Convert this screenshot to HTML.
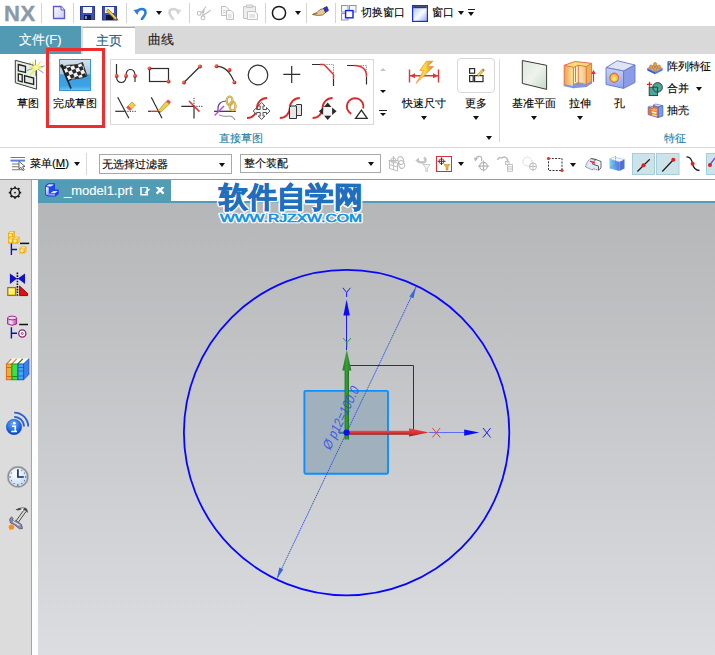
<!DOCTYPE html>
<html><head><meta charset="utf-8">
<style>
*{margin:0;padding:0;box-sizing:border-box}
html,body{width:715px;height:655px;overflow:hidden;background:#fff;font-family:"Liberation Sans",sans-serif;position:relative}
.a{position:absolute}
.t{position:absolute;font-size:12px;line-height:12px;color:#000;white-space:nowrap;-webkit-text-stroke:0.12px currentColor}
.sep{position:absolute;width:1px;background:#d4d4d4}
.dd{position:absolute;width:0;height:0;border-left:3.5px solid transparent;border-right:3.5px solid transparent;border-top:4px solid #111}
</style></head><body>

<!-- title bar -->
<div class="a" style="left:0;top:0;width:715px;height:26px;background:#fff"></div>
<div class="a" style="left:4px;top:0px;font-size:22px;line-height:27px;font-weight:bold;color:#8a9aa8;letter-spacing:0.5px;-webkit-text-stroke:0.4px #8a9aa8">NX</div>
<div class="sep" style="left:41px;top:3px;height:20px"></div>
<svg class="a" style="left:52px;top:5px" width="14" height="15" viewBox="0 0 14 15">
 <defs><linearGradient id="gdoc" x1="0" y1="0" x2="1" y2="1"><stop offset="0" stop-color="#fff"/><stop offset="1" stop-color="#c8c8f0"/></linearGradient></defs>
 <path d="M1.5 1.5 H9 L12.5 5 V13.5 H1.5 Z" fill="url(#gdoc)" stroke="#5b5bd0" stroke-width="1.3"/>
 <path d="M9 1.5 V5 H12.5" fill="#eef" stroke="#5b5bd0" stroke-width="1"/>
</svg>
<div class="sep" style="left:73px;top:3px;height:20px"></div>
<svg class="a" style="left:80px;top:6px" width="15" height="14" viewBox="0 0 15 14">
 <rect x="0.5" y="0.5" width="14" height="13.5" fill="#4050b0" stroke="#283890"/>
 <rect x="3" y="1" width="9" height="6" fill="#f4f6ff"/>
 <rect x="4" y="9" width="7" height="5" fill="#101830"/>
 <rect x="5" y="10" width="2" height="3" fill="#6a8af0"/>
</svg>
<svg class="a" style="left:102px;top:6px" width="17" height="15" viewBox="0 0 17 15">
 <rect x="0.5" y="0.5" width="14" height="13.5" fill="#4050b0" stroke="#283890"/>
 <rect x="3" y="1" width="9" height="6" fill="#f4f6ff"/>
 <rect x="4" y="9" width="7" height="5" fill="#101830"/>
 <path d="M6 3 L15 12 L13.5 14 L4.5 5 Z" fill="#f0d040" stroke="#806010" stroke-width="0.7"/>
 <path d="M15 12 L16.5 14.5 L13.5 14 Z" fill="#e02020"/>
</svg>
<div class="sep" style="left:126px;top:3px;height:20px"></div>
<svg class="a" style="left:133px;top:6px" width="14" height="14" viewBox="0 0 14 14">
 <path d="M4 6 C6 2,12 2,12.5 6 C13 9,10 11,9 13" fill="none" stroke="#2a7de0" stroke-width="2.6" stroke-linecap="round"/>
 <path d="M0.5 4 L6 3 L4.5 9 Z" fill="#2a7de0"/>
</svg>
<div class="dd" style="left:156px;top:11px"></div>
<svg class="a" style="left:168px;top:6px" width="14" height="14" viewBox="0 0 14 14">
 <path d="M10 6 C8 2,2 2,1.5 6 C1 9,4 11,5 13" fill="none" stroke="#d4d4d4" stroke-width="2.6" stroke-linecap="round"/>
 <path d="M13.5 4 L8 3 L9.5 9 Z" fill="#d4d4d4"/>
</svg>
<div class="sep" style="left:189px;top:3px;height:20px"></div>
<svg class="a" style="left:196px;top:5px" width="16" height="16" viewBox="196 5 16 16">
 <g fill="none" stroke="#c0c0c0" stroke-width="1.1">
  <circle cx="199.2" cy="13.4" r="1.9"/><circle cx="203" cy="17.8" r="1.9"/>
  <path d="M201 13 L206 6.5 M202.2 16 L210.6 10.3 M201 13 Q203 12 204.5 11 M202.5 15.8 L204.3 8.8"/>
 </g>
</svg>
<svg class="a" style="left:220px;top:5px" width="16" height="16" viewBox="220 5 16 16">
 <g fill="#f8f8f8" stroke="#c0c0c0" stroke-width="1">
  <path d="M221.5 6.5 H226 L228.5 9 V15.5 H221.5 Z"/>
  <path d="M226.5 10.5 H231 L233.5 13 V19.5 H226.5 Z"/>
 </g>
 <path d="M223 10.5 H225.5 M223 12.5 H225.5 M228 15 H231.5 M228 17 H231.5" stroke="#c8c8c8" stroke-width="0.9"/>
</svg>
<svg class="a" style="left:242px;top:4px" width="17" height="17" viewBox="242 4 17 17">
 <path d="M243.5 6.5 H255.5 V18.5 H243.5 Z" fill="#eeeeee" stroke="#c4c4c4"/>
 <path d="M246.5 5 H252.5 V7.5 H246.5 Z" fill="#e4e4e4" stroke="#c4c4c4" stroke-width="0.9"/>
 <path d="M247.5 11.5 H255 L257.5 14 V19.5 H247.5 Z" fill="#fafafa" stroke="#c4c4c4"/>
 <path d="M249.5 15 H255 M249.5 17 H255" stroke="#c8c8c8" stroke-width="0.9"/>
</svg>
<div class="sep" style="left:265px;top:3px;height:20px"></div>
<svg class="a" style="left:271px;top:5px" width="16" height="16" viewBox="0 0 16 16">
 <circle cx="8" cy="8" r="6.6" fill="none" stroke="#1a1a1a" stroke-width="1.5"/>
</svg>
<div class="dd" style="left:295px;top:11px"></div>
<div class="sep" style="left:306px;top:3px;height:20px"></div>
<svg class="a" style="left:311px;top:5px" width="18" height="15" viewBox="311 5 18 15">
 <path d="M312.5 14.5 L317 12.5 L320 9.5 L324 8.5 L326 12 L322.5 15 L317.5 15.5 Z" fill="#e8c890" stroke="#7a5a30" stroke-width="0.8"/>
 <path d="M312.5 14.5 L317.5 13.5" stroke="#7a5a30" stroke-width="0.7"/>
 <path d="M323.5 8 L327 6.5 L328.5 10.5 L325.5 12.5 Z" fill="#2a3ad0" stroke="#101880" stroke-width="0.6"/>
</svg>
<div class="sep" style="left:335px;top:3px;height:20px"></div>
<svg class="a" style="left:340px;top:4px" width="17" height="18" viewBox="340 4 17 18">
 <g fill="#f4f6fa" stroke="#8a96a8" stroke-width="1">
  <rect x="341.5" y="5.5" width="6.5" height="6.5"/><rect x="349.5" y="5.5" width="6.5" height="6.5"/><rect x="341.5" y="13.5" width="6.5" height="6.5"/>
 </g>
 <rect x="345.6" y="10.6" width="7.4" height="7.2" fill="#fff" stroke="#1020f0" stroke-width="1.4"/>
</svg>
<div class="t" style="left:361px;top:5px;font-size:11.2px;line-height:14px">切换窗口</div>
<svg class="a" style="left:411px;top:4px" width="17" height="18" viewBox="411 4 17 18">
 <defs><linearGradient id="gwin" x1="0" y1="0" x2="1" y2="1"><stop offset="0" stop-color="#a8c0ec"/><stop offset="0.55" stop-color="#f8faff"/><stop offset="1" stop-color="#8eaae6"/></linearGradient></defs>
 <rect x="412.6" y="5.6" width="14.8" height="15.8" fill="url(#gwin)" stroke="#1a2ae8" stroke-width="1.2"/>
 <rect x="413.2" y="6.2" width="13.6" height="2" fill="#283a68"/>
</svg>
<div class="t" style="left:432px;top:5px;font-size:11.2px;line-height:14px">窗口</div>
<div class="dd" style="left:458px;top:11px"></div>
<div class="a" style="left:468px;top:9px;width:7px;height:1.3px;background:#222"></div>
<div class="dd" style="left:468px;top:12px"></div>

<!-- tab row -->
<div class="a" style="left:0;top:26px;width:715px;height:28px;background:#d9d9d9"></div>
<div class="a" style="left:0;top:26px;width:81px;height:28px;background:#5299b3"></div>
<div class="a" style="left:82px;top:27px;width:53px;height:27px;background:#fff;border-top:1px solid #a8a8a8;border-left:1px solid #e0e0e0"></div>
<div class="t" style="left:19px;top:33px;font-size:13px;line-height:14px;color:#fff">文件(F)</div>
<div class="t" style="left:96px;top:34px;font-size:13px;line-height:14px;color:#166088">主页</div>
<div class="t" style="left:148px;top:33px;font-size:13px;line-height:14px;color:#222">曲线</div>

<!-- ribbon -->
<div class="a" style="left:0;top:54px;width:715px;height:93px;background:#fff"></div>

<!-- 草图 -->
<svg class="a" style="left:13px;top:57px" width="34" height="34" viewBox="13 57 34 34">
 <path d="M15.3 60.3 L36.6 66 L36.6 89.2 L15.3 82.8 Z" fill="#e8f0e8" stroke="#3a3a3a" stroke-width="1"/>
 <path d="M18.3 64.5 L25.5 66.3 L25.5 72.5 L18.3 70.8 Z" fill="#e2e8e2" stroke="#222" stroke-width="1.3"/>
 <path d="M18.3 73.8 L22.2 74.8 L22.2 81.8 L18.3 80.8 Z" fill="#eef2ee" stroke="#222" stroke-width="1.3"/>
 <path d="M24.6 75.6 L33.6 78 L33.6 84.5 L24.6 82.2 Z" fill="#e2e8e2" stroke="#222" stroke-width="1.3"/>
 <g stroke="#5a98c0" stroke-width="0.9"><path d="M35.6 67.5 L35.4 59.5 M35.6 67.5 L44.5 66 M35.6 67.5 L43.5 73 M35.6 67.5 L35.5 76 M35.6 67.5 L27 70.5 M35.6 67.5 L29.5 63"/></g>
 <path d="M35.8 67.5 L40.5 61.5 L37.6 66 L43 67.5 L37.8 68.8 L30 75 L35 68.7 L29 67.5 L34.5 66.3 L32.5 62 Z" fill="#f4f060" stroke="#f0e840" stroke-width="0.8"/>
 <circle cx="36" cy="67.5" r="2.6" fill="#f8f4a0"/>
</svg>
<div class="t" style="left:17px;top:97px;font-size:11.3px">草图</div>

<!-- 完成草图 -->
<svg class="a" style="left:59px;top:59px" width="32" height="32" viewBox="0 0 32 32">
 <defs>
  <linearGradient id="gfin" x1="0" y1="0" x2="0" y2="1">
   <stop offset="0" stop-color="#d6e2ec"/><stop offset="0.45" stop-color="#a9c7df"/><stop offset="0.5" stop-color="#3d9ee0"/><stop offset="0.85" stop-color="#3aa3e6"/><stop offset="1" stop-color="#6ec6f2"/>
  </linearGradient>
  <pattern id="chk" width="7.6" height="7.6" patternUnits="userSpaceOnUse" patternTransform="rotate(-22)">
   <rect width="7.6" height="7.6" fill="#f2f2f2"/><rect width="3.8" height="3.8" fill="#2a2a2a"/><rect x="3.8" y="3.8" width="3.8" height="3.8" fill="#2a2a2a"/>
  </pattern>
 </defs>
 <rect x="0.5" y="0.5" width="31" height="31" fill="url(#gfin)" stroke="#3a95d0"/>
 <path d="M3.5 8 Q9 5.5,14 6 Q19 6,23.5 3.5 L28 17 Q23 19.5,18 19.5 Q13 19.5,9 22 Z" fill="url(#chk)" stroke="#2a2a2a" stroke-width="0.9"/>
 <path d="M2.8 7.5 L12 29.5" stroke="#1a1a1a" stroke-width="1.7"/>
 <circle cx="2.8" cy="7" r="1.7" fill="#1a1a1a"/>
</svg>
<div class="t" style="left:53px;top:97px;font-size:11.3px">完成草图</div>
<div class="a" style="left:46px;top:48px;width:59px;height:80px;border:3px solid #ee2d2d"></div>

<!-- gallery -->
<div class="a" style="left:110px;top:59px;width:264px;height:66px;border:1px solid #d9d9d9"></div>
<svg class="a" style="left:110px;top:59px" width="264" height="66" viewBox="110 59 264 66">
 <g fill="none" stroke="#2e2e2e" stroke-width="1.2">
  <path d="M116.5 64 V76 Q116.5 82.5 121.3 82.5 Q126 82.5 126 76 Q126 69.5 130.5 69.5 Q135 69.5 135 76 V82"/>
  <rect x="149.5" y="68.5" width="19" height="13"/>
  <path d="M184 82.5 L200 66.5"/>
  <path d="M216.5 66.3 Q228 66 234.4 82.4"/>
  <circle cx="258" cy="75" r="9.8"/>
  <path d="M283.3 74.4 H300.3 M291.7 66 V83"/>
  <path d="M312 64.5 H320 M333.5 78.5 V86"/>
  <path d="M347 65.5 H354 M366.5 76.5 V84.5"/>
 </g>
 <g fill="none" stroke="#e03030" stroke-width="1.5">
  <path d="M320 64.5 H324 L333.5 74.5 V78.5"/>
  <path d="M354 65.5 Q366.5 65.5 366.5 76.5"/>
 </g>
 <g fill="none" stroke="#888" stroke-width="1" stroke-dasharray="1.2 1.2">
  <path d="M324 64.5 H333.5 V74.5"/>
  <path d="M358 65.5 H366.5 V72"/>
 </g>
 <defs><radialGradient id="gdot" cx="0.35" cy="0.35" r="0.7"><stop offset="0" stop-color="#ff8070"/><stop offset="0.6" stop-color="#e03828"/><stop offset="1" stop-color="#a01810"/></radialGradient></defs><g fill="url(#gdot)">
  <circle cx="116.6" cy="76" r="1.95"/><circle cx="126" cy="76" r="1.95"/><circle cx="135" cy="76" r="1.95"/>
  <circle cx="149.5" cy="68.4" r="1.95"/><circle cx="168.5" cy="81.5" r="1.95"/>
  <circle cx="184" cy="82.5" r="1.95"/><circle cx="200" cy="66.5" r="1.95"/>
  <circle cx="216.5" cy="66.3" r="1.95"/><circle cx="229.5" cy="70" r="1.95"/><circle cx="234.4" cy="82.4" r="1.95"/>
 </g>
 <!-- row 2 -->
 <g fill="none" stroke="#2e2e2e" stroke-width="1.2">
  <path d="M117.7 97.3 L128.9 118.3"/>
  <path d="M115.3 111.3 H124.7"/>
  <path d="M151.3 97.3 L162 118.3"/>
  <path d="M148 111.3 H151.3"/>
  <path d="M181.3 106.3 H194 V118.6"/>
  <path d="M214 111.3 H235.8"/>
 </g>
 <g fill="none" stroke="#333" stroke-width="1" stroke-dasharray="1.2 1.2">
  <path d="M125 111.3 H136"/>
  <path d="M194 106.3 H203 M194 106.3 V97"/>
 </g>
 <path d="M151.3 111.3 H158.5" stroke="#e03030" stroke-width="1.4"/>
 <path d="M189 101 L199.5 111.6" stroke="#e03030" stroke-width="1.5"/>
 <path d="M126.5 107.5 L132 102 L135.5 105 L130 110.5 Z" fill="#f0d040" stroke="#a08020" stroke-width="0.6"/>
 <path d="M126.5 107.5 L128.3 105.7 L131.8 109 L130 110.5 Z" fill="#e85050"/>
 <path d="M158 111 L166 101.5 L169.5 104 L161 112 Z" fill="#f0d040" stroke="#a08020" stroke-width="0.6"/>
 <path d="M166 101.5 L168 99.5 L171 102 L169.5 104 Z" fill="#e85050"/>
 <path d="M158 111 L158.5 113 L161 112 Z" fill="#333"/>
 <path d="M218 111 Q217 101 227 101" fill="none" stroke="#5040b0" stroke-width="1.2"/>
 <path d="M214.6 115.5 L224 106" stroke="#d040e0" stroke-width="1.4"/>
 <path d="M219 115 Q224 117 229 116 Q233 116 235 120" fill="none" stroke="#999" stroke-width="1.2"/>
 <ellipse cx="229.6" cy="100.8" rx="2.9" ry="4.3" fill="none" stroke="#c09020" stroke-width="2.2"/>
 <ellipse cx="229.6" cy="100.8" rx="2.9" ry="4.3" fill="none" stroke="#f8e8a0" stroke-width="0.8"/>
 <ellipse cx="232.6" cy="106.2" rx="2.9" ry="4.3" fill="none" stroke="#c09020" stroke-width="2.2"/>
 <ellipse cx="232.6" cy="106.2" rx="2.9" ry="4.3" fill="none" stroke="#f8e8a0" stroke-width="0.8"/>
 
 <g fill="none" stroke="#d82a2a" stroke-width="1.9">
  <path d="M247 118 A10 10 0 0 0 257 108 A10 10 0 0 1 267 98"/>
  <path d="M279.8 118 A10 10 0 0 0 289.8 108 A10 10 0 0 1 299.8 98"/>
  <path d="M312.6 118 A10 10 0 0 0 322.6 108 A10 10 0 0 1 332.6 98"/>
  <path d="M351.2 113.8 A8.3 8.3 0 1 1 363.2 108.5"/>
 </g>
 <path d="M261.6 102.5 L265 106 H263 V109.5 H266.5 V107.5 L270 111 L266.5 114.5 V112.5 H263 V116 H265 L261.6 119.5 L258.2 116 H260.2 V112.5 H256.7 V114.5 L253.2 111 L256.7 107.5 V109.5 H260.2 V106 H258.2 Z" fill="#f4f4f4" stroke="#444" stroke-width="0.9"/>
 <path d="M295.5 105.5 L296.5 104.5 H301.5 V115.5 H295.5 Z" fill="#e4e4e4" stroke="#333" stroke-width="1"/>
 <path d="M289.5 107.5 L291 106 H296.5 V118.5 H289.5 Z" fill="#e8e8e8" stroke="#333" stroke-width="1"/>
 <path d="M327.7 102.5 L331.5 107 H323.9 Z M327.7 120 L331.5 115.5 H323.9 Z M318.8 111.3 L323.3 107.5 V115.1 Z M336.6 111.3 L332.1 107.5 V115.1 Z" fill="#2a2a2a"/>
 <rect x="323.5" y="107" width="8.4" height="8.4" fill="#f4f4f4"/>
 <path d="M355.6 118.4 H367.2 L361.4 110.2 Z" fill="none" stroke="#2a2a2a" stroke-width="1.3"/>
</svg>
<!-- scroll arrows -->
<div class="a" style="left:379.5px;top:68px;width:0;height:0;border-left:3.5px solid transparent;border-right:3.5px solid transparent;border-bottom:3.5px solid #c4c4c4"></div>
<div class="dd" style="left:379.5px;top:90px;border-top-width:3.5px"></div>
<div class="a" style="left:379px;top:110px;width:7.5px;height:1.2px;background:#222"></div>
<div class="dd" style="left:379.5px;top:112.5px;border-top-width:3.5px"></div>
<div class="t" style="left:219px;top:132px;font-size:11.3px;color:#2a7fa8">直接草图</div>

<!-- 快速尺寸 -->
<svg class="a" style="left:405px;top:58px" width="38" height="30" viewBox="405 58 38 30">
 <g stroke="#d83838" stroke-width="1.4" fill="#d83838">
  <path d="M409.5 69.5 V82.5 M438.5 69.5 V82.5 M410 75.7 H438"/>
  <path d="M410 75.7 L415 73.2 V78.2 Z M438 75.7 L433 73.2 V78.2 Z" stroke="none"/>
 </g>
 <defs><linearGradient id="gbolt" x1="0" y1="0" x2="1" y2="0"><stop offset="0" stop-color="#f8c030"/><stop offset="0.5" stop-color="#f4e040"/><stop offset="1" stop-color="#f07030"/></linearGradient></defs>
 <path d="M426.3 61.2 H432.9 L427.6 66.5 H433.5 L416.2 83.3 L423.5 70.4 H419.8 Z" fill="url(#gbolt)" stroke="#f08838" stroke-width="0.7"/>
</svg>
<div class="t" style="left:402px;top:97px;font-size:11.3px">快速尺寸</div>
<div class="dd" style="left:421px;top:116px"></div>
<!-- 更多 -->
<div class="a" style="left:457px;top:58px;width:38px;height:35px;border:1px solid #d8d8d8;border-radius:4px"></div>
<svg class="a" style="left:466px;top:66px" width="20" height="18" viewBox="466 66 20 18">
 <g fill="none" stroke="#2a2a2a" stroke-width="1.2">
  <rect x="469.6" y="68.6" width="5" height="4.6"/>
  <rect x="469.6" y="75.6" width="3.6" height="6"/>
  <rect x="474.6" y="75.6" width="8.4" height="6"/>
 </g>
 <path d="M477 75 L482 69.5 L483.8 71 L478.8 76.3 Z" fill="#f0d040" stroke="#8a6a20" stroke-width="0.5"/>
 <path d="M482 69.5 L483 68.5 L484.8 70 L483.8 71 Z" fill="#e05050"/>
</svg>
<div class="t" style="left:465px;top:97px;font-size:11.3px">更多</div>
<div class="dd" style="left:473px;top:116px"></div>
<div class="dd" style="left:486px;top:136px"></div>
<div class="sep" style="left:499px;top:59px;height:83px;background:#dadada"></div>

<!-- 基准平面 -->
<svg class="a" style="left:519px;top:57px" width="30" height="35" viewBox="519 57 30 35">
 <defs><linearGradient id="gpl" x1="0" y1="0" x2="1" y2="1"><stop offset="0" stop-color="#dce6dc"/><stop offset="0.5" stop-color="#eef3ee"/><stop offset="1" stop-color="#c4d8c4"/></linearGradient></defs>
 <path d="M522.3 60.5 L546.6 65.3 L546.6 89.4 L522.3 83.4 Z" fill="url(#gpl)" stroke="#3a3a3a" stroke-width="1"/>
</svg>
<div class="t" style="left:512px;top:97px;font-size:11.3px">基准平面</div>
<div class="dd" style="left:531px;top:116px"></div>
<!-- 拉伸 -->
<svg class="a" style="left:562px;top:59px" width="36" height="32" viewBox="562 59 36 32">
 <defs>
  <linearGradient id="gex1" x1="0" y1="0" x2="1" y2="0"><stop offset="0" stop-color="#f0a040"/><stop offset="1" stop-color="#fbe6b0"/></linearGradient>
  <linearGradient id="gex2" x1="0" y1="0" x2="1" y2="0"><stop offset="0" stop-color="#fbeec0"/><stop offset="1" stop-color="#efc070"/></linearGradient>
 </defs>
 <path d="M564.2 80 L573.4 82 L578.3 80 L591.6 79 V83.7 L586.3 87.1 L573.4 88.2 L564.2 86.3 Z" fill="#7a9ae4"/>
 <path d="M564.2 65.3 L573.4 67.3 V86 L564.2 84 Z" fill="url(#gex1)"/>
 <path d="M573.4 67.3 L578.3 65.3 V82 L573.4 84 Z" fill="#fdf2b8"/>
 <path d="M578.3 65.3 L586.3 66.5 V84 L578.3 82 Z" fill="url(#gex2)"/>
 <path d="M586.3 66.5 L591.6 63.3 V81 L586.3 84 Z" fill="#f0b050"/>
 <path d="M564.2 65.3 L575.1 61.5 L591.6 63.3 L586.3 66.5 L578.3 65.3 L573.4 67.3 Z" fill="#f6e070"/>
 <g fill="none" stroke="#e87050" stroke-width="1">
  <path d="M564.2 65.3 L575.1 61.5 L591.6 63.3 V83.7 M564.2 65.3 V86.3 M564.2 65.3 L573.4 67.3 L578.3 65.3 L586.3 66.5 L591.6 63.3"/>
  <path d="M573.4 67.3 V88.2 M578.3 65.3 V86 M586.3 66.5 V87.1 M575.5 67 V82" />
 </g>
 <path d="M593.5 81.8 V72.5" stroke="#e03040" stroke-width="1.2"/>
 <path d="M591.2 74 L593.5 69.8 L595.8 74 Z" fill="#e03040"/>
</svg>
<div class="t" style="left:569px;top:97px;font-size:11.3px">拉伸</div>
<div class="dd" style="left:577px;top:116px"></div>
<!-- 孔 -->
<svg class="a" style="left:604px;top:59px" width="33" height="32" viewBox="604 59 33 32">
 <defs>
  <linearGradient id="gh1" x1="0" y1="0" x2="0" y2="1"><stop offset="0" stop-color="#c8d4f4"/><stop offset="1" stop-color="#8ea4ec"/></linearGradient>
  <radialGradient id="gh2" cx="0.5" cy="0.6" r="0.6"><stop offset="0" stop-color="#fff080"/><stop offset="1" stop-color="#f0a020"/></radialGradient>
 </defs>
 <path d="M606 67.6 L617.3 60.7 L635 65 L623.6 71 Z" fill="#dde4f4" stroke="#6a78c8" stroke-width="0.9"/>
 <path d="M606 67.6 L623.6 71 V88.4 L606 84.5 Z" fill="url(#gh1)" stroke="#6a78c8" stroke-width="0.9"/>
 <path d="M623.6 71 L635 65 V82.5 L623.6 88.4 Z" fill="#8a9ce8" stroke="#6a78c8" stroke-width="0.9"/>
 <ellipse cx="614.2" cy="77.7" rx="4.3" ry="4.6" fill="url(#gh2)" stroke="#e05030" stroke-width="0.9"/>
</svg>
<div class="t" style="left:614px;top:97px;font-size:11.3px">孔</div>
<!-- small buttons -->
<svg class="a" style="left:645px;top:59px" width="20" height="62" viewBox="645 59 20 62">
 <path d="M647.3 68.5 L655 64.8 L662.6 68.5 L655 72.3 Z" fill="#a8c0f4" stroke="#5a7ad0" stroke-width="0.6"/>
 <path d="M647.3 68.5 L655 72.3 V74.3 L647.3 70.5 Z" fill="#3a5cc4"/>
 <path d="M655 72.3 L662.6 68.5 V70.5 L655 74.3 Z" fill="#5a7cd8"/>
 <g fill="#f0a038" stroke="#a86010" stroke-width="0.5">
  <rect x="649.6" y="65" width="3" height="4.2" rx="1.4"/><rect x="653.6" y="62.6" width="3" height="4.2" rx="1.4"/>
  <rect x="657.5" y="65" width="3" height="4.2" rx="1.4"/><rect x="653.6" y="67" width="3" height="4.2" rx="1.4"/>
 </g>
 <path d="M647 84.3 H652 M649.5 81.8 V86.8" stroke="#d82828" stroke-width="1.3"/>
 <rect x="649.2" y="87.2" width="8.4" height="8.4" fill="#4aa898" stroke="#333" stroke-width="0.9"/>
 <circle cx="657.6" cy="87.4" r="4.8" fill="#4aa898" stroke="#333" stroke-width="0.9"/>
 <path d="M652.8 87.2 H657.6 V92.2" fill="none" stroke="#333" stroke-width="0.9"/>
 <path d="M648.2 107 L650 106 L653.3 106.8 V105 L655.5 104 L662.8 105.6 L658.1 107 L653.3 106.5" fill="#d8e4f8" stroke="#5a78d0" stroke-width="0.7"/>
 <path d="M658.1 107 L662.8 105.6 V116 L658.1 117.6 Z" fill="#8098e8" stroke="#4060c8" stroke-width="0.8"/>
 <path d="M648.2 107 L653.3 108.2 V105.2 L658.1 107 V117.6 L648.2 114.6 Z" fill="#f07030" stroke="#4a68c8" stroke-width="0.8"/>
 <path d="M653.3 108.2 L657.2 109 V111.5 L650 110 Z" fill="#f8a860"/>
 <path d="M651.5 111.2 L656.5 112 V114 L652 113 Z" fill="#fff4d0"/>
 <path d="M652 114 L656.8 115 V116.5 L652.5 115.5 Z" fill="#f8e860"/>
</svg>
<div class="t" style="left:667px;top:60px;font-size:11.3px">阵列特征</div>
<div class="t" style="left:667px;top:82px;font-size:11.3px">合并</div>
<div class="dd" style="left:696px;top:87px"></div>
<div class="t" style="left:667px;top:104px;font-size:11.3px">抽壳</div>
<div class="t" style="left:664px;top:132px;font-size:11.3px;color:#2a7fa8">特征</div>
<div class="a" style="left:0;top:147px;width:715px;height:1px;background:#d8d8d8"></div>

<!-- toolbar row -->
<div class="a" style="left:0;top:148px;width:715px;height:31px;background:#fff"></div>
<div class="a" style="left:0;top:179px;width:715px;height:1px;background:#8f9ca6"></div>
<!-- toolbar content -->
<svg class="a" style="left:9px;top:155px" width="18" height="17" viewBox="9 155 18 17">
 <path d="M10.5 157.5 H25 M12 164 H22 M12 166.8 H20 M12 169.8 H24" stroke="#777" stroke-width="1.1"/>
 <path d="M10.5 160.6 H25" stroke="#5a80e0" stroke-width="2"/>
 <path d="M19 161.3 V169 L21 167.3 L23 170.5 L24.3 169.8 L22.5 166.7 L25 166.5 Z" fill="#fff" stroke="#444" stroke-width="0.8"/>
</svg>
<div class="t" style="left:30px;top:157px;font-size:11.3px">菜单(<u>M</u>)</div>
<div class="dd" style="left:74px;top:162px"></div>
<div class="sep" style="left:86px;top:153px;height:22px;background:#d8d8d8"></div>
<div class="a" style="left:99px;top:154px;width:133px;height:20px;border:1px solid #a8a8a8;background:#fff"></div>
<div class="t" style="left:102px;top:158px;font-size:11px">无选择过滤器</div>
<div class="dd" style="left:219px;top:163px"></div>
<div class="a" style="left:240px;top:154px;width:141px;height:19px;border:1px solid #a8a8a8;background:#fff"></div>
<div class="t" style="left:244px;top:157px;font-size:11px">整个装配</div>
<div class="dd" style="left:368px;top:162px"></div>
<svg class="a" style="left:386px;top:152px" width="329" height="26" viewBox="386 152 329 26">
 <g fill="none" stroke="#bdbdbd" stroke-width="1">
  <path d="M389.5 160.5 V168.5 L397.5 171 V163 Z M389.5 164.5 L397.5 167 M393.5 161.8 V170"/>
  <path d="M388.5 160.5 H398 M393.4 156 V162"/>
  <circle cx="393.4" cy="160.5" r="2.6"/>
  <ellipse cx="400.8" cy="160.5" rx="2.8" ry="4" transform="rotate(-20 400.8 160.5)"/>
  <ellipse cx="401.5" cy="164.5" rx="2.8" ry="4" transform="rotate(-20 401.5 164.5)"/>
 </g>
 <path d="M417.5 160.5 Q420 163.5 424.5 162 Q427 160 424 157.5" fill="none" stroke="#c4c4c4" stroke-width="2.4"/>
 <path d="M415.3 160.5 L419 157.5 V163.5 Z" fill="#c4c4c4"/>
 <path d="M423 164.5 H430.3 L427.5 168 V171.5 H425.8 V168 Z" fill="#f4f4f4" stroke="#c8c8c8" stroke-width="0.9"/>
 <g fill="none" stroke="#b4b4b4" stroke-width="1.2">
  <path d="M475.5 159.5 Q476.5 156 479.5 156.3 Q482.5 156.8 481.5 161"/>
  <circle cx="483.5" cy="166.2" r="3.8"/>
  <path d="M478 166.2 H489 M483.5 160.5 V171.5"/>
 </g>
 <path d="M474 157.5 L478 158.5 L475 161.5 Z" fill="#b4b4b4"/>
 <g fill="none" stroke="#c0c0c0" stroke-width="1">
  <path d="M497.5 160 Q499 156.5 502 158 Q504 156 506.5 158 Q508.5 160 507 162.5" stroke-width="1.6"/>
  <rect x="505.5" y="161.5" width="3.5" height="3"/>
  <path d="M507.5 164.5 V171.5 M507.5 164.5 H512.5 V171.3 H507.5 M507.5 166.8 H512.5 M507.5 169 H512.5"/>
 </g>
 <g fill="none" stroke="#bdbdbd" stroke-width="1">
  <circle cx="527.5" cy="161.5" r="4.5" stroke-dasharray="1 1"/>
  <circle cx="533" cy="166.5" r="3.5"/><path d="M529 166.5 H537 M533 162.5 V170.5"/>
 </g>
 <rect x="436.5" y="156.5" width="15" height="15" fill="none" stroke="#d03040" stroke-width="1"/>
 <circle cx="441.5" cy="161.3" r="2.5" fill="none" stroke="#d03030" stroke-width="1"/>
 <path d="M437.5 161.3 H445.5 M441.5 157.5 V165" stroke="#333" stroke-width="1"/>
 <path d="M444 164.5 H450 L448 167 V170 H446 V167 Z" fill="#f0b030" stroke="#c08020" stroke-width="0.5"/>
 <rect x="548.5" y="158.5" width="13.5" height="12" fill="none" stroke="#333" stroke-width="1" stroke-dasharray="2 1.3"/>
 <circle cx="548.5" cy="158.5" r="1.6" fill="#e03030"/><circle cx="562" cy="170.5" r="1.6" fill="#e03030"/>
 <path d="M585.5 167 Q587 160.5 591 158.5 L596 159.5 Q594 161 592.5 164 L598.5 166 V170.2 L593 168.8 L592.5 170 Z" fill="#e4e8f0" stroke="#5a6aa0" stroke-width="0.8" stroke-dasharray="1.6 0.6"/>
 <path d="M591 158.5 L596 159.5 L601 161.5 V168 L598.5 170.2 V166 L592.5 164 Q594 161 596 159.5" fill="#f4f4f4" stroke="#444" stroke-width="0.8"/>
 <path d="M590 161.2 L595 163.2" stroke="#e82828" stroke-width="1.3"/>
 <defs><linearGradient id="gcube" x1="0" y1="0" x2="1" y2="0"><stop offset="0" stop-color="#78d4f4"/><stop offset="1" stop-color="#4a78e0"/></linearGradient></defs>
 <path d="M609.5 159 L614 157 L624.5 159.5 L619.5 162 Z" fill="#f4f4fa" stroke="#8090e0" stroke-width="0.6" stroke-dasharray="1.2 0.6"/>
 <path d="M609.5 159 L619.5 162 V171 L609.5 168.5 Z" fill="url(#gcube)"/>
 <path d="M619.5 162 L624.5 159.5 V168.5 L619.5 171 Z" fill="#4a70e0"/>
 <path d="M615.5 156 V165 L624 167.5 M615.5 165 L610 168" stroke="#e05050" stroke-width="0.6" fill="none" stroke-dasharray="1.2 0.6"/>
 <rect x="632.5" y="153.5" width="22" height="21" fill="#cde3ea" stroke="#a6ced8"/>
 <rect x="656.5" y="153.5" width="22.5" height="21" fill="#cde3ea" stroke="#a6ced8"/>
 <rect x="706.5" y="153.5" width="22" height="21" fill="#cde3ea" stroke="#a6ced8"/>
 <path d="M637.4 171.5 L649.8 159.2 M662.3 171.5 L673.8 159.2" stroke="#222" stroke-width="1.3"/>
 <circle cx="643.5" cy="165.3" r="2" fill="#e02020"/>
 <circle cx="673.3" cy="159.8" r="2" fill="#e02020"/>
 <path d="M686.5 157 Q691 156.5 692.5 163.5 Q694 170.5 699.5 170.5" fill="none" stroke="#222" stroke-width="1.3"/>
 <circle cx="692.6" cy="163.8" r="2" fill="#e02020"/>
 <path d="M709 166 L715 158" stroke="#8040d0" stroke-width="1.3"/>
 <circle cx="710" cy="165" r="2" fill="#e02020"/>
</svg>
<div class="dd" style="left:458px;top:162px"></div>
<div class="dd" style="left:570px;top:163px"></div>


<!-- left bar -->
<div class="a" style="left:0;top:180px;width:31px;height:475px;background:#dcdcdc"></div>
<div class="a" style="left:31px;top:180px;width:1px;height:475px;background:#a5a5a5"></div>
<div class="a" style="left:32px;top:180px;width:6px;height:475px;background:#fdfdfd"></div>
<svg class="a" style="left:0;top:180px" width="31" height="360" viewBox="0 180 31 360">
 <defs>
  <radialGradient id="gcf" cx="0.4" cy="0.4" r="0.7"><stop offset="0" stop-color="#fffcc0"/><stop offset="0.6" stop-color="#f8e050"/><stop offset="1" stop-color="#f0a000"/></radialGradient>
  <g id="cube">
   <path d="M0 2 L2 0 H7 V5 L5 7 H0 Z" fill="#f4a810"/>
   <path d="M0.8 2.6 H4.6 V6.3 H0.8 Z" fill="url(#gcf)"/>
   <path d="M1 2 L2.5 0.8 H6.2 L4.8 2 Z" fill="#fff0a0"/>
   <path d="M5.2 2.4 L6.4 1.2 V4.8 L5.2 6 Z" fill="#f8d040"/>
  </g>
  <radialGradient id="ginfo" cx="0.45" cy="0.3" r="0.7"><stop offset="0" stop-color="#6ab0ff"/><stop offset="0.7" stop-color="#1a64e0"/><stop offset="1" stop-color="#0a40b0"/></radialGradient>
  <radialGradient id="gclk" cx="0.4" cy="0.35" r="0.7"><stop offset="0" stop-color="#ffffff"/><stop offset="1" stop-color="#b8d4f4"/></radialGradient>
  <linearGradient id="gyel" x1="0" y1="0" x2="1" y2="1"><stop offset="0" stop-color="#ffffd0"/><stop offset="1" stop-color="#f8f000"/></linearGradient>
  <linearGradient id="gcyl" x1="0" y1="0" x2="1" y2="0"><stop offset="0" stop-color="#d090c8"/><stop offset="0.35" stop-color="#f4e0f8"/><stop offset="1" stop-color="#b84aa0"/></linearGradient>
 </defs>
 <!-- gear -->
 <circle cx="15" cy="192.6" r="4.5" fill="none" stroke="#1a1a1a" stroke-width="1.4"/>
 <g stroke="#1a1a1a" stroke-width="1.8"><path d="M15 186.4 V188.4 M15 196.8 V198.8 M8.8 192.6 H10.8 M19.2 192.6 H21.2 M10.6 188.2 L12 189.6 M18 195.6 L19.4 197 M19.4 188.2 L18 189.6 M12 195.6 L10.6 197"/></g>
 <circle cx="15" cy="192.6" r="0.9" fill="#1a1a1a"/>
 <!-- assembly nav -->
 <use href="#cube" x="8" y="231"/>
 <use href="#cube" x="8" y="236.5"/>
 <use href="#cube" x="12.5" y="236.8"/>
 <use href="#cube" x="19.5" y="246.5"/>
 <path d="M11.4 243.5 V255 M11.4 249.5 H17" stroke="#1010b0" stroke-width="1.4"/>
 <path d="M20 243.4 H29.2" stroke="#111" stroke-width="1.5"/>
 <!-- constraint nav -->
 <path d="M9.9 273.4 L17 278.6 L9.9 283.9 Z M25 273.4 L17.8 278.6 L25 283.9 Z" fill="#1010d0"/>
 <path d="M17.4 272.6 V296" stroke="#111" stroke-width="1.6" stroke-dasharray="1.6 1.1"/>
 <rect x="7.8" y="287.6" width="7.8" height="7.8" fill="url(#gyel)" stroke="#b07000" stroke-width="1.3"/>
 <path d="M19.6 286 L27.6 293.6 V295.6 H19.6 Z" fill="#e01010" stroke="#800000" stroke-width="0.9"/>
 <!-- part nav -->
 <path d="M7.6 318 V324 Q12.1 326.6 16.6 324 V318" fill="url(#gcyl)" stroke="#a02888" stroke-width="1"/>
 <ellipse cx="12.1" cy="318" rx="4.5" ry="1.9" fill="#f0d0ec" stroke="#a02888" stroke-width="1"/>
 <path d="M19.2 324.5 H28" stroke="#111" stroke-width="1.5"/>
 <path d="M11.4 327.2 V338.6 M11.4 333.3 H17" stroke="#1010b0" stroke-width="1.4"/>
 <circle cx="22.3" cy="333.5" r="3.6" fill="#fff" stroke="#902070" stroke-width="1.3"/>
 <circle cx="22.3" cy="333.5" r="1" fill="none" stroke="#902070" stroke-width="0.9"/>
 <!-- books -->
 <path d="M6.2 363.8 L11.2 358.6 H28.9 L23.5 363.8 Z" fill="#fff"/>
 <path d="M6.6 363.8 L11.4 358.8 M11.8 363.8 L16.6 358.8 M17.9 363.8 L22.7 358.8" stroke="#e07020" stroke-width="1.1"/>
 <path d="M17.9 363.8 L22.7 358.8" stroke="#20a020" stroke-width="1.1"/>
 <rect x="6.4" y="364" width="5.4" height="15.7" fill="#e0b040" stroke="#e06a10" stroke-width="1"/>
 <path d="M6.6 367.5 H11.6 M6.6 376.5 H11.6" stroke="#f05a10" stroke-width="1"/>
 <rect x="11.9" y="364" width="5.8" height="15.7" fill="#40e040" stroke="#10a010" stroke-width="1"/>
 <path d="M12 376.5 H17.6" stroke="#109010" stroke-width="1"/>
 <rect x="18" y="364" width="5.6" height="15.7" fill="#40a8f0" stroke="#2050d0" stroke-width="1"/>
 <path d="M18.1 367.5 H23.5 M18.1 371 H23.5 M18.1 376 H23.5" stroke="#2060d0" stroke-width="0.9"/>
 <path d="M23.6 363.8 L28.9 358.8 V374.4 L23.6 379.7 Z" fill="#3a80e8" stroke="#2050c8" stroke-width="0.8"/>
 <!-- info -->
 <path d="M14.2 412.6 A14 14 0 0 1 28.2 426.6" fill="none" stroke="#2a5fd0" stroke-width="1.8"/>
 <path d="M14.2 416.8 A9.8 9.8 0 0 1 24 426.6" fill="none" stroke="#2a5fd0" stroke-width="1.8"/>
 <circle cx="14" cy="427" r="7.7" fill="url(#ginfo)" stroke="#0a48c0" stroke-width="0.5"/>
 <circle cx="14.3" cy="423.2" r="1.4" fill="#fff"/>
 <path d="M12 426.2 H15.3 V431.2 M11.2 431.5 H17" stroke="#fff" stroke-width="1.6" fill="none"/>
 <!-- clock -->
 <circle cx="17.9" cy="476.9" r="10" fill="url(#gclk)" stroke="#8a8a8a" stroke-width="1.6"/>
 <circle cx="17.9" cy="476.9" r="10.8" fill="none" stroke="#c8c8c8" stroke-width="0.6"/>
 <g fill="#333"><circle cx="17.9" cy="485" r="0.7"/><circle cx="10" cy="476.9" r="0.7"/><circle cx="25.8" cy="476.9" r="0.7"/><circle cx="14" cy="483.5" r="0.5"/><circle cx="21.8" cy="483.5" r="0.5"/><circle cx="11.4" cy="480.7" r="0.5"/><circle cx="24.4" cy="480.7" r="0.5"/><circle cx="11.4" cy="473" r="0.5"/><circle cx="24.4" cy="473" r="0.5"/><circle cx="21.8" cy="470.3" r="0.5"/></g>
 <path d="M17.9 469.3 V477 H23.8" stroke="#1a2a50" stroke-width="1.6" fill="none"/>
 <!-- tools -->
 <path d="M23.5 510.5 L16 521 M26 511.5 L18.5 522" stroke="#4a4a4a" stroke-width="1"/>
 <path d="M23.5 510.5 L16 521 M26 511.5 L18.5 522" stroke="#f0f0f0" stroke-width="0" />
 <path d="M15.5 509.8 Q20 506.5 25.5 507.8 Q28.5 509.5 27.5 513 L25.5 510.8 Q21.5 509 18 510.5 Z" fill="#4a4a4a"/>
 <path d="M20.5 508.5 L24 508.3 L22.5 511 Z" fill="#fff"/>
 <path d="M9.5 519.5 L11.5 516.8 L13 518.5 L12.5 520.2 L14.5 521.5 L15.8 520.5 L21.5 524.5 L22.5 528.5 L19.5 528.8 L14 524.5 L10.5 523 Z" fill="#8c8aae" stroke="#44445e" stroke-width="0.7"/>
 <path d="M13 521.5 L19.5 525.5" stroke="#e8e8f4" stroke-width="1.2"/>
 <path d="M8.5 527 Q9 524 12 524.5 Q15 525.5 14 528.5 Q12 530.5 9.5 529.5 Z" fill="#f89010"/>
</svg>


<!-- document tab -->
<div class="a" style="left:38px;top:180px;width:677px;height:23px;background:#fff"></div>
<div class="a" style="left:38px;top:180px;width:133px;height:21px;background:#529cb5"></div>
<div class="a" style="left:38px;top:201px;width:677px;height:2px;background:#529cb5"></div>
<svg class="a" style="left:44px;top:182px" width="16" height="16" viewBox="44 182 16 16">
 <defs><linearGradient id="gblk" x1="0" y1="0" x2="0" y2="1"><stop offset="0" stop-color="#f4f4ff"/><stop offset="1" stop-color="#9aa4ff"/></linearGradient></defs>
 <path d="M45 186 L48.2 183.3 H55 V189.4 H58.8 V194 L55.5 196.4 H48 L45 195 Z" fill="#1e3ee6"/>
 <path d="M45.9 187 L48.7 187.6 V195.6 L45.9 194.6 Z" fill="url(#gblk)"/>
 <path d="M48.7 193.4 L55 193.8 V195.8 L48.7 195.6 Z" fill="#8a9aff"/>
 <path d="M46.2 186.3 L49 184.2 L54 184.4 L51 186.6 Z" fill="#e4ecff"/>
 <path d="M49.5 187.5 L54.2 185.5 V191 L49.5 192.5 Z" fill="#1450d8"/>
 <path d="M50.5 193 L53.5 191 H58 L55 193.2 Z" fill="#dce6ff"/>
</svg>
<div class="t" style="left:64px;top:184px;font-size:13px;line-height:14px;color:#fff">_model1.prt</div>
<svg class="a" style="left:139px;top:187px" width="28" height="11" viewBox="139 187 28 11">
 <path d="M141 187 H147.2 V194.8 H141 Z" fill="none" stroke="#fff" stroke-width="1.5"/>
 <path d="M142.5 186 H145.8" stroke="#fff" stroke-width="1.2"/>
 <path d="M145 193 L149.6 189" stroke="#fff" stroke-width="1.6"/>
 <path d="M156.6 186.6 L163.6 193.6 M163.6 186.6 L156.6 193.6" stroke="#fff" stroke-width="2.3"/>
</svg>


<!-- viewport -->
<div class="a" style="left:38px;top:203px;width:677px;height:452px;background:linear-gradient(#b5b6b8,#dcdde0)"></div>
<!-- watermark -->
<svg class="a" style="left:210px;top:176px" width="160" height="52" viewBox="210 176 160 52">
 <text x="219" y="207" font-family="Liberation Sans, sans-serif" font-size="29" font-weight="900" textLength="144" lengthAdjust="spacingAndGlyphs" fill="#1f6fbf" stroke="#fff" stroke-width="4" stroke-linejoin="round" paint-order="stroke">软件自学网</text>
 <text x="219" y="207" font-family="Liberation Sans, sans-serif" font-size="29" font-weight="900" textLength="144" lengthAdjust="spacingAndGlyphs" fill="#1f6fbf" stroke="#1f6fbf" stroke-width="0.9">软件自学网</text>
 <text x="220" y="221.6" font-family="Liberation Sans, sans-serif" font-size="10.8" font-weight="normal" textLength="142" lengthAdjust="spacingAndGlyphs" fill="#1a94e4" stroke="#fff" stroke-width="2.6" stroke-linejoin="round" paint-order="stroke">WWW.RJZXW.COM</text>
 <text x="220" y="221.6" font-family="Liberation Sans, sans-serif" font-size="10.8" font-weight="normal" textLength="142" lengthAdjust="spacingAndGlyphs" fill="#1a94e4" stroke="#1a94e4" stroke-width="0.5">WWW.RJZXW.COM</text>
</svg>
<!-- sketch -->
<svg class="a" style="left:38px;top:203px" width="677" height="452" viewBox="38 203 677 452">
 <defs>
  <linearGradient id="gred" x1="0" y1="0" x2="0" y2="1"><stop offset="0" stop-color="#f04848"/><stop offset="0.6" stop-color="#d83030"/><stop offset="1" stop-color="#901818"/></linearGradient>
  <linearGradient id="ggrn" x1="0" y1="0" x2="1" y2="0"><stop offset="0" stop-color="#1e7a1e"/><stop offset="0.5" stop-color="#3aa03a"/><stop offset="1" stop-color="#1e701e"/></linearGradient>
 </defs>
 <rect x="304.4" y="390.9" width="83.6" height="82.8" rx="1.2" fill="#a1b0bd" stroke="#0a90ff" stroke-width="1.9"/>
 <circle cx="346.6" cy="432.6" r="162.7" fill="none" stroke="#0606ff" stroke-width="1.8"/>
 <!-- dimension line -->
 <path d="M416 287 L276.8 578.9" stroke="#3058e4" stroke-width="1" stroke-dasharray="1.6 0.7"/>
 <path d="M416 287 L409.5 296.5 L413.5 298.3 Z" fill="#3a64e0"/>
 <path d="M276.8 578.9 L283.3 569.4 L279.3 567.6 Z" fill="#3a64e0"/>
 <!-- dim box -->
 <path d="M349 365.5 H413.5 V432.5" fill="none" stroke="#1a1aff" stroke-width="1"/>
 <!-- axes thin -->
 <path d="M346.5 315 V350" stroke="#1a1aff" stroke-width="1"/>
 <path d="M346.6 299.5 L349.8 315.5 H343.4 Z" fill="#0a0aff"/>
 <path d="M429 432.5 H464.5" stroke="#5a6cf8" stroke-width="1"/>
 <path d="M479.3 432.6 L464.2 429.5 V435.8 Z" fill="#0a0aff"/>
 <g fill="none" stroke="#1a1aff" stroke-width="1">
  <path d="M342.8 287.8 L346.6 292.5 L350.4 287.8 M346.6 292.5 V297"/>
  <path d="M483 428 L490.6 437.5 M490.6 428 L483 437.5"/>
 </g>
 <path d="M432.4 428 L440.2 437.5 M440.2 428 L432.4 437.5" stroke="#e04040" stroke-width="1"/>
 <path d="M343 338 L347 342.5 L351 338 M347 342.5 V346.5" fill="none" stroke="#30a030" stroke-width="1"/>
 <!-- green arrow -->
 <rect x="344.6" y="369" width="4.4" height="70.5" fill="url(#ggrn)"/>
 <path d="M346.8 349.5 L351.3 370.5 H342.3 Z" fill="url(#ggrn)"/>
 <path d="M339 432.8 H346" stroke="#2a8870" stroke-width="2.2"/>
 <!-- red arrow -->
 <rect x="346" y="430.8" width="63.5" height="3.9" fill="url(#gred)"/>
 <path d="M428.9 432.4 L409 428.3 V436.5 Z" fill="url(#gred)"/>
 <circle cx="346.6" cy="432.6" r="3.1" fill="#0a10f0"/>
 <!-- dimension text -->
 <text transform="translate(330 451) rotate(-64.3) skewX(-10)" font-family="Liberation Sans, sans-serif" font-size="13.5" fill="#2a48f0" fill-opacity="0.85" textLength="68" lengthAdjust="spacingAndGlyphs">Ø p12=100.0</text>
</svg>


</body></html>
